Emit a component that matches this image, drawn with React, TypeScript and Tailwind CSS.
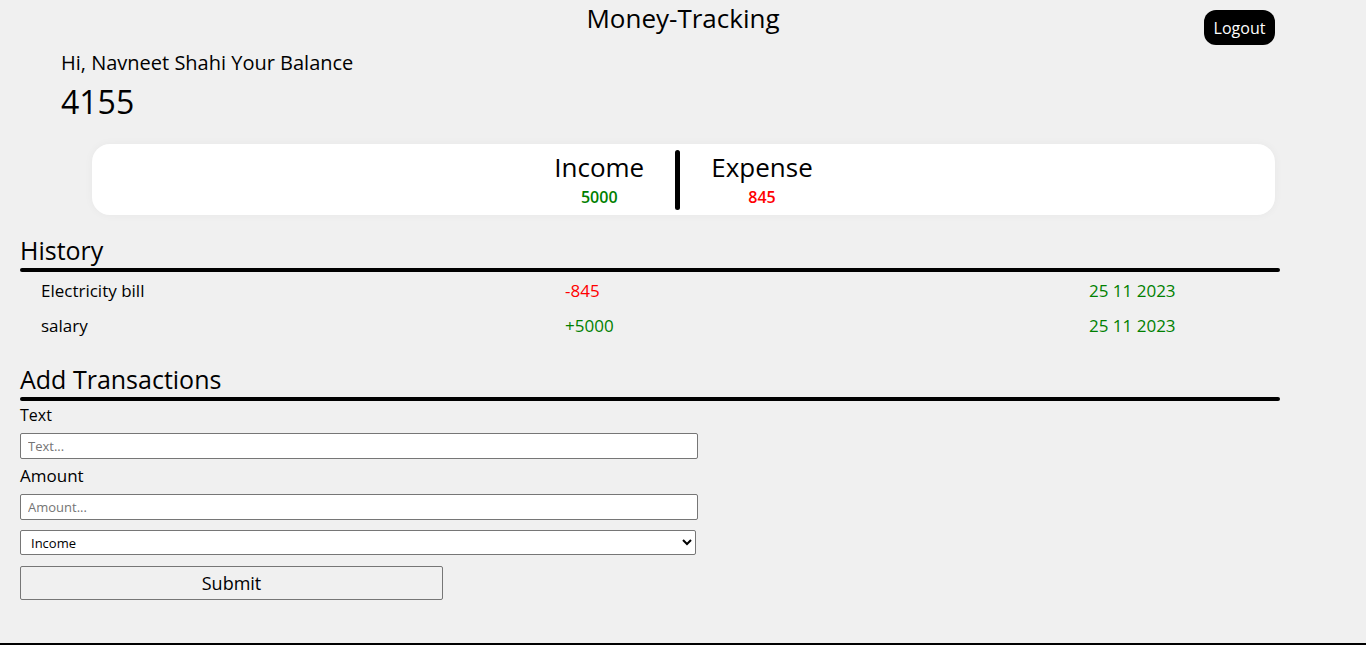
const font = { fontFamily: '"Open Sans", "Noto Sans", sans-serif' };

const history = [
  { text: 'Electricity bill', amount: '-845', date: '25 11 2023', income: false },
  { text: 'salary', amount: '+5000', date: '25 11 2023', income: true },
];

function Divider() {
  return <div className="h-[4px] w-full rounded-full bg-black" />;
}

export default function App() {
  return (
    <div
      className="h-[645px] overflow-hidden border-b-2 border-black bg-[#f0f0f0] text-black"
      style={font}
    >
      {/* header */}
      <div className="grid grid-cols-[1fr_auto_1fr]">
        <div />
        <h1 className="text-[26px] leading-[36px] font-medium">Money-Tracking</h1>
        <div className="flex justify-end pr-[91px]">
          <button className="mt-[10px] h-[35px] w-[71px] rounded-[12px] bg-black text-[16px] text-white">
            Logout
          </button>
        </div>
      </div>

      {/* balance */}
      <div className="mt-[3px] pl-[61px]">
        <p className="text-[20px] leading-[30px] font-medium">Hi, Navneet Shahi Your Balance</p>
        <p className="text-[32px] leading-[48px] font-medium">4155</p>
      </div>

      {/* income / expense */}
      <div className="ml-[92px] mt-[18px] flex h-[71px] w-[1183px] items-center justify-center gap-[31px] rounded-[18px] bg-white shadow-[0_0_10px_rgba(0,0,0,0.04)]">
        <div className="flex flex-col items-center">
          <span className="text-[26px] leading-[34px] font-medium">Income</span>
          <span className="text-[16px] leading-[26px] font-semibold text-[#008000]">5000</span>
        </div>
        <div className="h-[60px] w-[5px] rounded-full bg-black" />
        <div className="flex flex-col items-center">
          <span className="text-[26px] leading-[34px] font-medium">Expense</span>
          <span className="text-[16px] leading-[26px] font-semibold text-[#ff0000]">845</span>
        </div>
      </div>

      {/* history */}
      <div className="ml-[20px] mt-[17px] w-[1260px]">
        <h2 className="text-[25px] leading-[36px] font-medium">History</h2>
        <Divider />
        <div className="mt-[1px] pl-[21px]">
          {history.map((h) => (
            <div key={h.text} className="grid h-[35px] grid-cols-[524px_524px_1fr] items-center text-[17px] font-medium">
              <span>{h.text}</span>
              <span className={h.income ? 'text-[#008000]' : 'text-[#ff0000]'}>{h.amount}</span>
              <span className="text-[#008000]">{h.date}</span>
            </div>
          ))}
        </div>

        <h2 className="mt-[18px] text-[25px] leading-[36px] font-medium">Add Transactions</h2>
        <Divider />
      </div>

      {/* form */}
      <form className="ml-[20px] flex flex-col items-start">
        <label className="mt-[2px] text-[16px] leading-[24px] font-medium">Text</label>
        <input
          placeholder="Text..."
          className="mt-[6px] h-[26px] w-[678px] rounded-[2px] border border-[#767676] bg-white px-[7px] text-[13px] placeholder:text-[#757575] outline-none"
        />
        <label className="mt-[5px] text-[17px] leading-[24px] font-medium">Amount</label>
        <input
          placeholder="Amount..."
          className="mt-[6px] h-[26px] w-[678px] rounded-[2px] border border-[#767676] bg-white px-[7px] text-[13px] placeholder:text-[#757575] outline-none"
        />
        <select className="mt-[10px] h-[25px] w-[676px] rounded-[2px] border border-[#767676] bg-white pl-[6px] text-[13px]">
          <option>Income</option>
          <option>Expense</option>
        </select>
        <button
          type="button"
          className="mt-[11px] h-[34px] w-[423px] rounded-[2px] border border-[#767676] bg-[#f0f0f0] text-[18px]"
        >
          Submit
        </button>
      </form>
    </div>
  );
}
